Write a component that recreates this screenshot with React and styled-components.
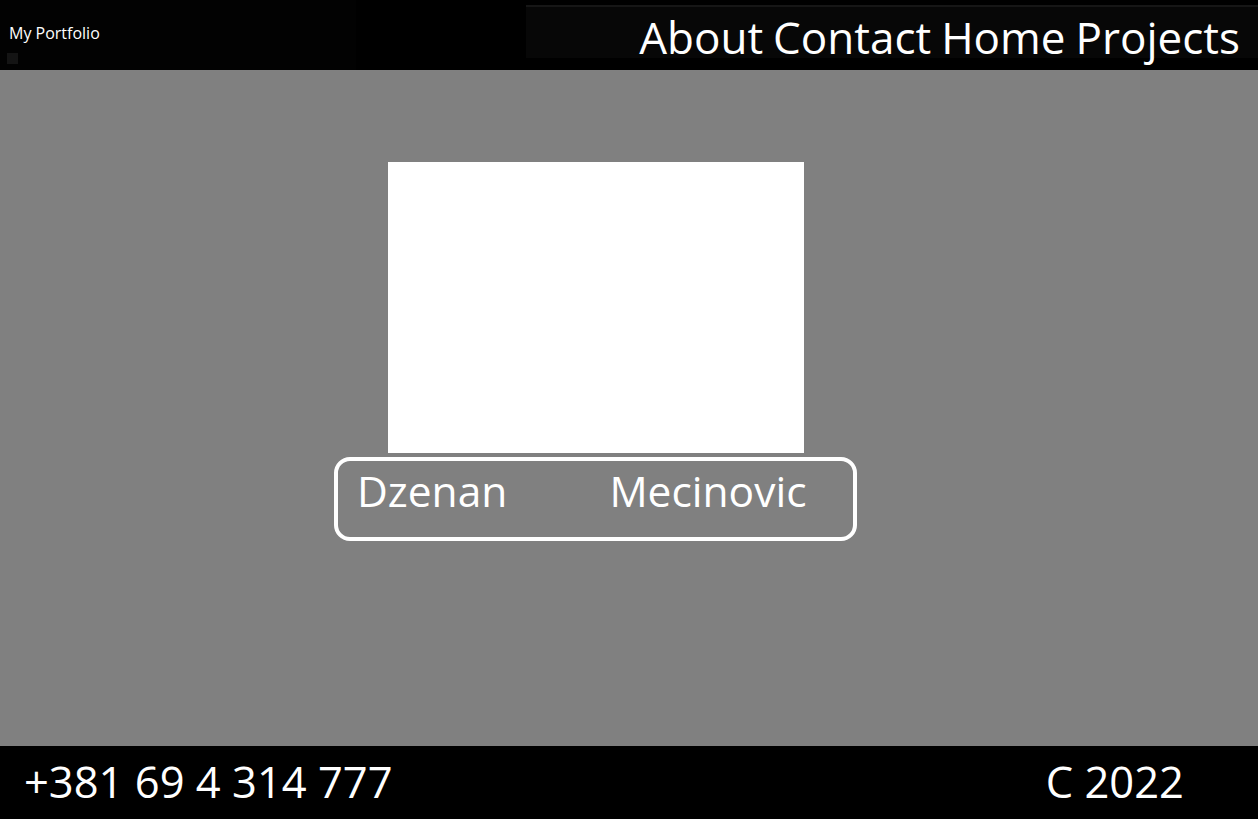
import React from "react";
import styled, { createGlobalStyle } from "styled-components";

const GlobalStyle = createGlobalStyle`
  *, *::before, *::after {
    box-sizing: border-box;
  }
  html, body {
    margin: 0;
    padding: 0;
    background: #808080;
  }
  body {
    font-family: "Open Sans", "Noto Sans", sans-serif;
    color: #fff;
  }
`;

function App() {
  return (
    <>
      <GlobalStyle />
      <Page>
        <Header>
          <Brand>
            <BrandText>My Portfolio</BrandText>
            <BrandDot />
          </Brand>
          <Nav>
            <NavBar />
            <NavLinks>
              <NavLink>About</NavLink>
              <NavLink>Contact</NavLink>
              <NavLink>Home</NavLink>
              <NavLink>Projects</NavLink>
            </NavLinks>
          </Nav>
        </Header>
        <Main>
          <Profile>
            <Photo />
            <NameBox>
              <NamePart>Dzenan</NamePart>
              <NamePart>Mecinovic</NamePart>
            </NameBox>
          </Profile>
        </Main>
        <Footer>
          <FooterText>+381 69 4 314 777</FooterText>
          <FooterText>C 2022</FooterText>
        </Footer>
      </Page>
    </>
  );
}

export default App;

const Page = styled.div`
  width: 100vw;
  height: 100vh;
  display: flex;
  flex-direction: column;
  overflow: hidden;
`;

const Header = styled.header`
  height: 70px;
  flex-shrink: 0;
  background-color: #000;
  display: flex;
  justify-content: space-between;
`;

const Brand = styled.div`
  display: flex;
  flex-direction: column;
  padding: 22px 0 0 9px;
  width: 356px;
  background-color: #020202;
`;

const BrandText = styled.span`
  font-size: 16px;
  line-height: 22px;
`;

const BrandDot = styled.div`
  width: 11px;
  height: 11px;
  margin: 9px 0 0 -2px;
  background-color: #141414;
`;

const Nav = styled.nav`
  flex: 1;
  display: flex;
  flex-direction: column;
  align-items: flex-end;
  padding: 5px 0 0 170px;
`;

const NavBar = styled.div`
  align-self: stretch;
  height: 2px;
  background-color: #161616;
`;

const NavLinks = styled.div`
  align-self: stretch;
  display: flex;
  justify-content: flex-end;
  gap: 10px;
  padding: 2px 18px 0 0;
  height: 51px;
  background-color: #070707;
`;

const NavLink = styled.a`
  font-size: 44px;
  line-height: 56px;
  color: #fff;
  cursor: pointer;
`;

const Main = styled.main`
  flex: 1;
  background-color: #808080;
  padding: 92px 0 0 334px;
`;

const Profile = styled.div`
  width: 523px;
  display: flex;
  flex-direction: column;
  align-items: center;
  gap: 4px;
`;

const Photo = styled.div`
  width: 416px;
  height: 291px;
  background-color: #fff;
`;

const NameBox = styled.div`
  align-self: stretch;
  height: 84px;
  border: 4px solid #fff;
  border-radius: 16px;
  display: flex;
  align-items: center;
  gap: 102px;
  padding: 0 0 15px 19px;
`;

const NamePart = styled.span`
  font-size: 42.5px;
  line-height: 1;
  color: #fff;
`;

const Footer = styled.footer`
  height: 73px;
  flex-shrink: 0;
  background-color: #000;
  display: flex;
  justify-content: space-between;
  align-items: center;
  padding: 0 74px 2px 24px;
`;

const FooterText = styled.span`
  font-size: 43.5px;
  color: #fff;
`;
